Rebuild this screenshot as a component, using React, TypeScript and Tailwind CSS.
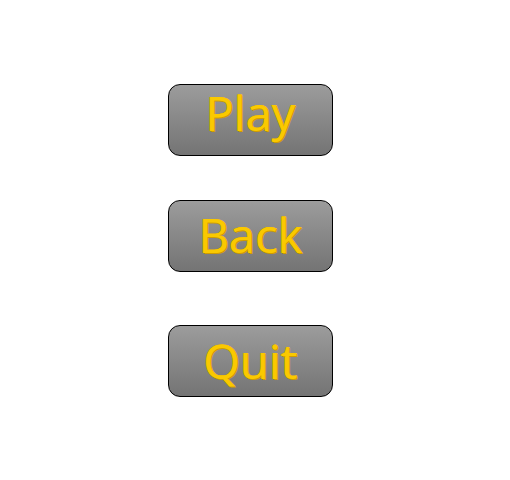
import * as React from 'react';

const MenuButton = ({ label, offset }: { label: string; offset: string }) => (
  <button
    type="button"
    className={`flex h-[72px] w-[165px] items-start justify-center rounded-[12px] border border-black bg-gradient-to-b from-[#9c9c9c] to-[#747474] ${offset}`}
  >
    <span
      className="text-[47px] leading-[52px] text-[#fac900] [font-family:'Open_Sans',sans-serif] [text-shadow:1px_1px_0_#cf9c00,-0.5px_-0.5px_0_#f0bc00,0.5px_0_0_#e0ac00]"
    >
      {label}
    </span>
  </button>
);

export default function App() {
  return (
    <div className="h-[480px] w-[510px] bg-white">
      <div className="flex flex-col pl-[168px] pt-[84px]">
        <MenuButton label="Play" offset="pt-[2px]" />
        <div className="mt-[44px]">
          <MenuButton label="Back" offset="pt-[8px]" />
        </div>
        <div className="mt-[53px]">
          <MenuButton label="Quit" offset="pt-[9px]" />
        </div>
      </div>
    </div>
  );
}
